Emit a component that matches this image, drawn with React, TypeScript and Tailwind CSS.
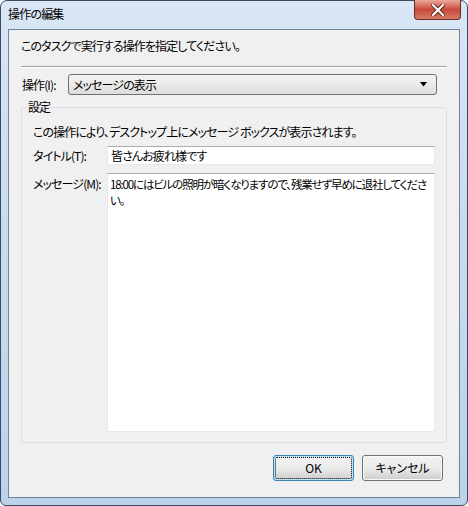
import React from 'react';

const font = "font-['Meiryo_UI','Noto_Sans_CJK_JP',sans-serif] [font-feature-settings:'palt']";

const CloseGlyph = () => (
    <svg width="14" height="12" viewBox="0 0 14 12">
        <path d="M2 1 L12 11 M12 1 L2 11" stroke="#5a1d17" strokeWidth="4" strokeLinecap="square"/>
        <path d="M2 1 L12 11 M12 1 L2 11" stroke="#ffffff" strokeWidth="2.2" strokeLinecap="square"/>
    </svg>
);

const Button = ({label, primary}: { label: string; primary?: boolean }) => (
    <div
        className={
            "w-[81px] h-[26px] rounded-[3px] border p-[1px] " +
            (primary ? "border-[#3c7fb1] bg-[#b9e3f7]" : "border-[#707070] bg-[#fbfbfb]")
        }>
        <div
            className={
                "w-full h-full flex items-center justify-center rounded-[2px] text-[12px] text-black bg-gradient-to-b from-[#f2f2f2] via-[#ebebeb] to-[#cfcfcf] " +
                (primary ? "outline outline-1 outline-dotted outline-black -outline-offset-1" : "")
            }>
            {label}
        </div>
    </div>
);

const App = () => {
    return (
        <div className={"w-[468px] h-[506px] overflow-hidden " + font}>
            <div
                className="w-full h-full flex flex-col rounded-t-[7px] rounded-b-[6px] border border-[#3b4a5c] bg-gradient-to-b from-[#d9e6f5] via-[#c7daf0] to-[#bcd2ec] px-[7px] pb-[7px]">
                {/* title bar */}
                <div className="h-[28px] flex items-start justify-between">
                    <div className="pt-[5px] text-[12px] leading-[16px] tracking-[-0.8px] text-black">操作の編集</div>
                    <div
                        className="w-[47px] h-[20px] mt-[-1px] mr-[-1px] rounded-b-[4px] border border-[#6b2a22] border-t-0 bg-gradient-to-b from-[#e9a99a] via-[#c9483a] to-[#d77a68] flex items-center justify-center">
                        <CloseGlyph/>
                    </div>
                </div>

                {/* client area */}
                <div className="flex-1 min-w-0 flex flex-col border border-[#6f829a] bg-[#f0f0f0] px-[12px] pb-[16px] text-[12px] leading-[16px] tracking-[-0.9px] text-black">
                    <div className="mt-[8px]">このタスクで実行する操作を指定してください。</div>
                    <div className="mt-[12px] h-[2px] border-t border-b border-t-[#a0a0a0] border-b-white"/>

                    <div className="mt-[6px] flex items-center pl-[1px]">
                        <div className="w-[46px] whitespace-nowrap">操作(I):</div>
                        <div
                            className="flex-1 mr-[10px] h-[21px] rounded-[3px] border border-[#707070] bg-gradient-to-b from-[#f2f2f2] via-[#ebebeb] to-[#dcdcdc] flex items-center pl-[4px] pr-[8px]">
                            <div className="flex-1">メッセージの表示</div>
                            <svg width="8" height="5" viewBox="0 0 8 5">
                                <path d="M0 0 H7 L3.5 4.5 Z" fill="#000"/>
                            </svg>
                        </div>
                    </div>

                    <fieldset
                        className="mt-[4px] flex-1 min-h-0 min-w-0 flex flex-col rounded-[3px] border border-[#d5dfe5] px-[11px] pb-[10px]">
                        <legend className="ml-[-6px] px-[1px]">設定</legend>
                        <div className="mt-[9px] whitespace-nowrap">この操作により、デスクトップ上にメッセージ ボックスが表示されます。</div>
                        <div className="mt-[6px] flex items-center">
                            <div className="w-[74px] whitespace-nowrap">タイトル(T):</div>
                            <div
                                className="flex-1 min-w-0 h-[19px] border border-[#e3e9ef] border-t-[#abadb3] bg-white flex items-center pl-[3px]">
                                皆さんお疲れ様です
                            </div>
                        </div>
                        <div className="mt-[8px] flex-1 min-h-0 flex items-start">
                            <div className="w-[74px] pt-[3px] whitespace-nowrap">メッセージ(M):</div>
                            <div
                                className="flex-1 min-w-0 h-full border border-[#e3e9ef] border-t-[#abadb3] bg-white pl-[2px] pt-[2px] overflow-hidden text-[11.5px] tracking-[-1.15px]">
                                <div className="whitespace-nowrap">18:00にはビルの照明が暗くなりますので、残業せず早めに退社してくださ</div>
                                <div className="whitespace-nowrap">い。</div>
                            </div>
                        </div>
                    </fieldset>

                    <div className="mt-[12px] flex justify-end gap-[8px] pr-[4px] tracking-normal">
                        <Button label="OK" primary/>
                        <Button label="キャンセル"/>
                    </div>
                </div>
            </div>
        </div>
    );
};

export default App;
